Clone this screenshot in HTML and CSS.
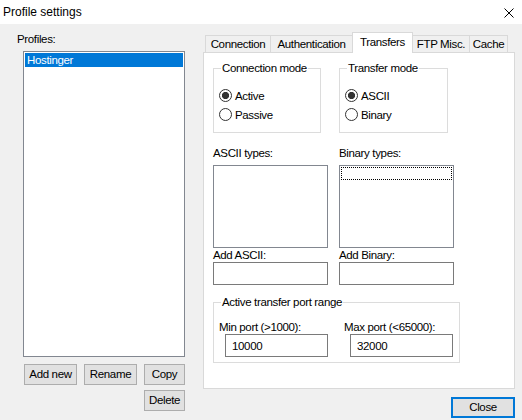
FILE: index.html
```html
<!DOCTYPE html>
<html>
<head>
<meta charset="utf-8">
<title>Profile settings</title>
<link rel="stylesheet" href="styles.css">
</head>
<body>
<div class="window">
  <div class="titlebar">
    <span class="title">Profile settings</span>
    <svg class="close-x" width="10" height="10" viewBox="0 0 10 10"><path d="M0.5 0.5 L9.5 9.5 M9.5 0.5 L0.5 9.5" stroke="#000" stroke-width="1" fill="none"/></svg>
  </div>
  <div class="main">
    <div class="left">
      <div class="label">Profiles:</div>
      <div class="listbox profiles">
        <div class="item selected">Hostinger</div>
      </div>
      <div class="btn-grid">
        <button class="btn">Add new</button>
        <button class="btn">Rename</button>
        <button class="btn">Copy</button>
        <button class="btn delete">Delete</button>
      </div>
    </div>
    <div class="right">
      <div class="tabs">
        <div class="tab t-conn">Connection</div>
        <div class="tab t-auth">Authentication</div>
        <div class="tab t-trans active">Transfers</div>
        <div class="tab t-ftp">FTP Misc.</div>
        <div class="tab t-cache">Cache</div>
      </div>
      <div class="panel">
        <div class="groups">
          <fieldset class="group g-conn">
            <legend>Connection mode</legend>
            <label class="radio-row"><input type="radio" name="cm" checked><span>Active</span></label>
            <label class="radio-row"><input type="radio" name="cm"><span>Passive</span></label>
          </fieldset>
          <fieldset class="group g-trans">
            <legend>Transfer mode</legend>
            <label class="radio-row"><input type="radio" name="tm" checked><span>ASCII</span></label>
            <label class="radio-row"><input type="radio" name="tm"><span>Binary</span></label>
          </fieldset>
        </div>
        <div class="types">
          <div class="col">
            <div class="type-label">ASCII types:</div>
            <div class="listbox types-list"></div>
            <div class="add-label">Add ASCII:</div>
            <input class="field add-field" type="text">
          </div>
          <div class="col">
            <div class="type-label">Binary types:</div>
            <div class="listbox types-list"><div class="focus-item"></div></div>
            <div class="add-label">Add Binary:</div>
            <input class="field add-field" type="text">
          </div>
        </div>
        <fieldset class="group g-port">
          <legend>Active transfer port range</legend>
          <div class="port-row">
            <div class="port-col c1">
              <div class="port-label">Min port (&gt;1000):</div>
              <input class="field port-field" type="text" value="10000">
            </div>
            <div class="port-col c2">
              <div class="port-label">Max port (&lt;65000):</div>
              <input class="field port-field" type="text" value="32000">
            </div>
          </div>
        </fieldset>
      </div>
      <div class="footer">
        <button class="btn close-btn">Close</button>
      </div>
    </div>
  </div>
</div>
</body>
</html>
```

FILE: styles.css
```css
* { box-sizing: border-box; }

html, body {
  margin: 0;
  padding: 0;
}

body {
  width: 522px;
  height: 420px;
  background: #f0f0f0;
  font-family: "Liberation Sans", Arial, sans-serif;
  font-size: 11.5px;
  letter-spacing: -0.35px;
  color: #000;
  overflow: hidden;
}

.window {
  width: 522px;
  height: 420px;
}

.titlebar {
  height: 24px;
  background: #fff;
  display: flex;
  align-items: center;
  justify-content: space-between;
  padding: 0 8px 0 3px;
}

.title {
  font-size: 12px;
  letter-spacing: 0;
}

.close-x {
  display: block;
  margin-top: 1px;
}

.main {
  display: flex;
  padding-top: 8px;
}

.left {
  width: 203px;
  padding-left: 17px;
}

.label {
  line-height: 15px;
}

.listbox {
  background: #fff;
  border: 1px solid #828790;
}

.profiles {
  margin-top: 4px;
  margin-left: 6px;
  width: 162px;
  height: 306px;
  padding: 1px;
}

.item {
  height: 14px;
  line-height: 14px;
  padding-left: 2px;
}

.item.selected {
  background: #0078d7;
  color: #fff;
}

.btn-grid {
  margin-top: 7px;
  margin-left: 7px;
  display: grid;
  grid-template-columns: 53px 53px 41px;
  grid-auto-rows: 21px;
  column-gap: 7px;
  row-gap: 5px;
}

.btn {
  font-family: inherit;
  font-size: 11.5px;
  letter-spacing: -0.35px;
  color: #000;
  background: #e1e1e1;
  border: 1px solid #adadad;
  padding: 0;
  margin: 0;
  line-height: 19px;
  text-align: center;
}

.btn.delete {
  grid-column: 3;
}

.right {
  width: 312px;
}

.tabs {
  display: flex;
  align-items: flex-end;
  height: 20px;
  padding-left: 2px;
}

.tab {
  height: 17px;
  border: 1px solid #d9d9d9;
  border-bottom: none;
  background: #f0f0f0;
  text-align: center;
  line-height: 16px;
  margin-left: -1px;
  white-space: nowrap;
}

.tab:first-child {
  margin-left: 0;
}

.tab.active {
  height: 21px;
  margin-bottom: -1px;
  background: #fff;
  padding-top: 1px;
  position: relative;
  z-index: 1;
}

.t-conn { width: 66px; }
.t-auth { width: 83px; }
.t-trans { width: 61px; }
.t-ftp { width: 58px; }
.t-cache { width: 39px; }

.panel {
  height: 337px;
  background: #fff;
  border: 1px solid #d9d9d9;
  padding: 8px 0 0 9px;
}

.groups {
  display: flex;
  gap: 18px;
}

.group {
  margin: 0;
  min-width: 0;
  border: 1px solid #dcdcdc;
  padding: 10px 0 8px 5px;
}

.group legend {
  margin-left: 2px;
  padding: 0 1px;
  line-height: 15px;
}

.g-conn { width: 108px; }
.g-trans { width: 109px; }

.radio-row {
  display: flex;
  align-items: center;
  height: 19px;
  gap: 3px;
}

.radio-row input {
  appearance: none;
  -webkit-appearance: none;
  width: 13px;
  height: 13px;
  margin: 0;
  border: 1px solid #333;
  border-radius: 50%;
  background: #fff;
  flex: none;
}

.radio-row input:checked {
  background: radial-gradient(circle, #333 0, #333 3.3px, #fff 3.9px);
}

.types {
  display: grid;
  grid-template-columns: 115px 115px;
  column-gap: 11px;
  margin-top: 13px;
}

.type-label {
  line-height: 15px;
  margin-bottom: 4px;
}

.types-list {
  height: 83px;
  padding: 1px;
}

.focus-item {
  height: 13px;
  border: 1px dotted #000;
}

.add-label {
  line-height: 14px;
}

.field {
  display: block;
  font-family: inherit;
  font-size: 11.5px;
  letter-spacing: -0.35px;
  color: #000;
  background: #fff;
  border: 1px solid #7a7a7a;
  margin: 0;
  outline: none;
}

.add-field {
  width: 115px;
  height: 23px;
}

.g-port {
  width: 247px;
  margin-top: 10px;
  padding: 11px 0 5px 5px;
}

.port-row {
  display: flex;
  gap: 16px;
}

.port-col.c1 { width: 109px; }
.port-col.c2 { width: 110px; }

.port-label {
  line-height: 13px;
}

.port-field {
  width: 103px;
  height: 23px;
  margin-left: 6px;
  padding: 0 0 0 6px;
}

.footer {
  display: flex;
  justify-content: flex-end;
  margin-top: 8px;
}

.close-btn {
  width: 64px;
  height: 21px;
  border: 2px solid #0078d7;
  line-height: 17px;
}
```
